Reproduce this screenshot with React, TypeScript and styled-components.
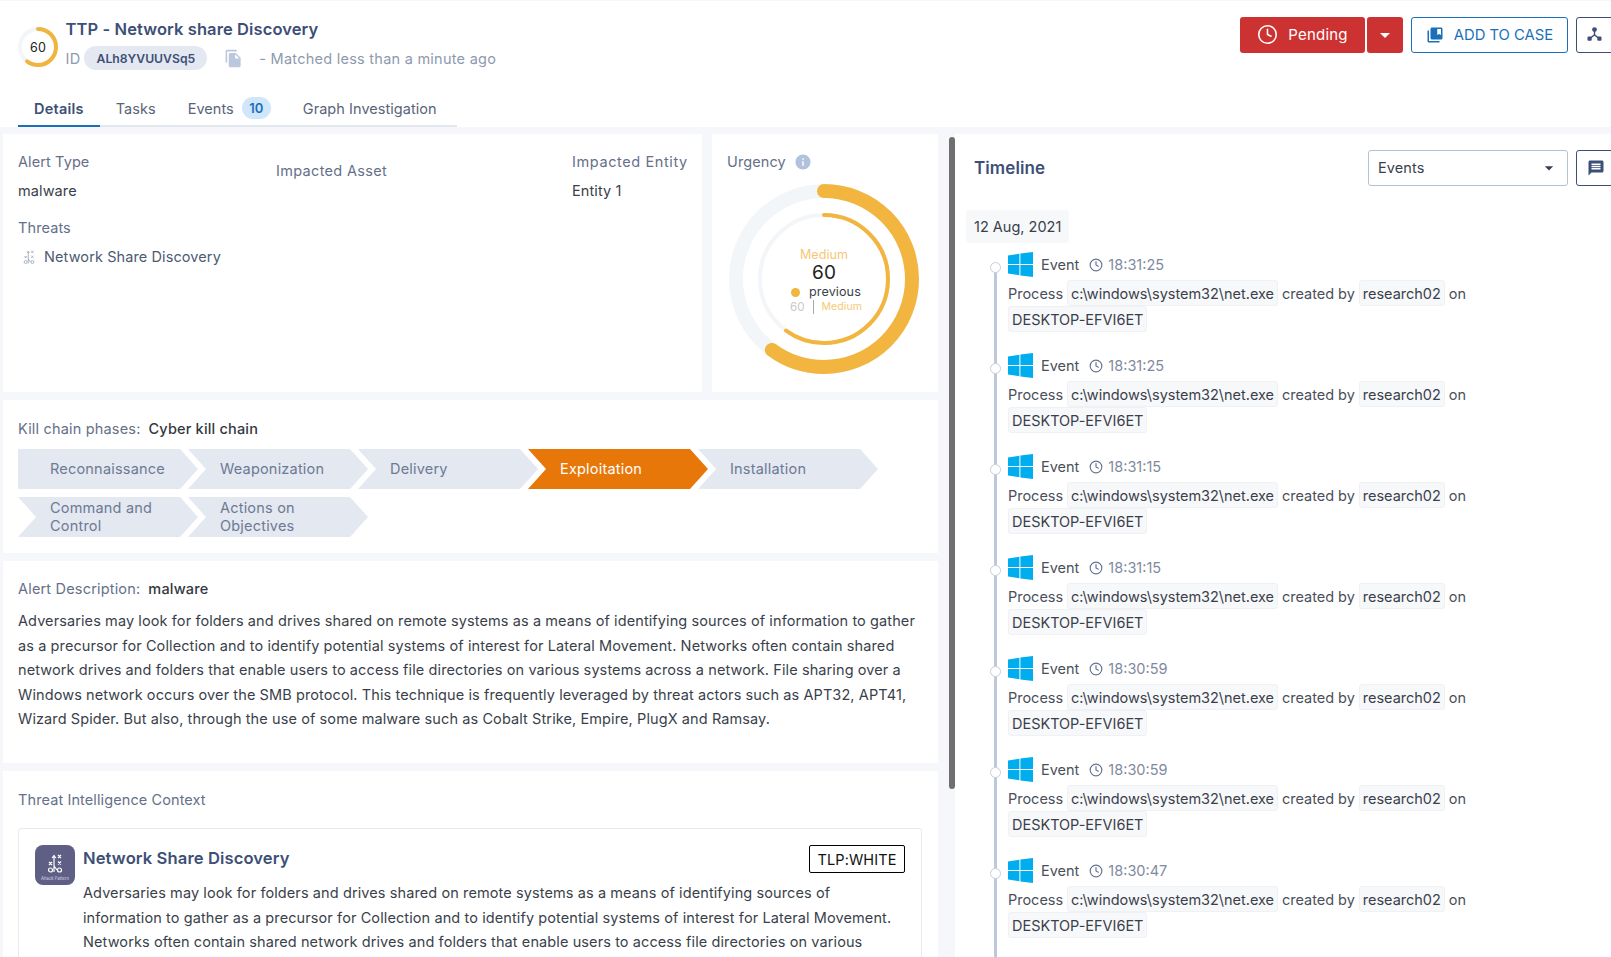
import styled, { createGlobalStyle } from "styled-components";
import { Clock } from "lucide-react";
import { MdArrowDropDown, MdCollectionsBookmark, MdFileCopy, MdInfo, MdMessage } from "react-icons/md";

const GlobalStyle = createGlobalStyle`
  html, body { margin: 0; height: 100%; overflow: hidden; }
  body {
    background: #f5f7fa;
    font-family: Inter, "Open Sans", sans-serif;
    font-size: 14.5px;
    letter-spacing: 0.1px;
    color: #3a3f4b;
  }
  * { box-sizing: border-box; }
`;

const Page = styled.div`
  width: 1611px;
  height: 957px;
  padding-top: 1px;
  overflow: hidden;
`;

// Header
const Header = styled.header`
  background: #fff;
  height: 126px;
  display: flex;
  flex-direction: column;
  justify-content: space-between;
`;

const TopRow = styled.div`
  display: flex;
  justify-content: space-between;
  padding: 16px 0 0 18px;
`;

const TitleGroup = styled.div`
  display: flex;
  gap: 7.5px;
`;

const ScoreRing = styled.div`
  position: relative;
  width: 40px;
  height: 40px;
  margin-top: 10px;
  display: flex;
  align-items: center;
  justify-content: center;
  font-size: 12.5px;
  color: #222;
  svg { position: absolute; inset: 0; }
`;

const Title = styled.div`
  font-size: 16.5px;
  font-weight: 600;
  line-height: 24px;
  color: #3d4f76;
`;

const IdRow = styled.div`
  display: flex;
  align-items: center;
  height: 24px;
  margin-top: 5px;
  color: #8e99ae;
  letter-spacing: 0.25px;
`;

const IdChip = styled.span`
  display: flex;
  align-items: center;
  justify-content: center;
  width: 123px;
  height: 24px;
  margin-left: 4px;
  border-radius: 12px;
  background: #e3e8f1;
  color: #3d4f76;
  font-size: 12.2px;
  font-weight: 600;
  letter-spacing: 0;
`;

const CopyIcon = styled(MdFileCopy)`
  margin: 0 16px 0 17px;
  color: #bcc7dc;
  font-size: 19px;
`;

const Actions = styled.div`
  display: flex;
  flex-shrink: 0;
  gap: 8px;
  margin-right: -14px;
`;

const StatusGroup = styled.div`
  display: flex;
  gap: 2px;
`;

const StatusButton = styled.button`
  display: flex;
  align-items: center;
  justify-content: center;
  gap: 10px;
  height: 36px;
  width: ${(p: { $wide?: boolean }) => (p.$wide ? "125px" : "36px")};
  padding: 0 0 1px;
  border: 0;
  border-radius: 3px;
  background: #cd3232;
  color: #fff;
  font: inherit;
  font-size: 15px;
  letter-spacing: 0.2px;
`;

const OutlineButton = styled.button<{ $accent?: boolean; $width: number }>`
  display: flex;
  align-items: center;
  justify-content: center;
  gap: 10px;
  flex-shrink: 0;
  height: 36px;
  width: ${(p) => p.$width}px;
  padding: 0 0 1px;
  border: 1px solid ${(p) => (p.$accent ? "#1a70b8" : "#3d4f76")};
  border-radius: 3px;
  background: #fff;
  color: ${(p) => (p.$accent ? "#1a70b8" : "#3d4f76")};
  font: inherit;
  font-size: 14.8px;
  svg { flex-shrink: 0; }
`;

const IconSlot = styled.span`
  display: flex;
  width: 36px;
  justify-content: center;
  margin-right: 12px;
`;

const Tabs = styled.nav`
  display: flex;
  align-items: stretch;
  width: 439px;
  height: 30px;
  margin-left: 18px;
  border-bottom: 2px solid #e3e7ee;
`;

const Tab = styled.div<{ $active?: boolean }>`
  display: flex;
  flex-shrink: 0;
  align-items: center;
  gap: 8px;
  padding: 0 16px 6px;
  margin-bottom: -2px;
  border-bottom: 2px solid ${(p) => (p.$active ? "#1a70b8" : "transparent")};
  color: ${(p) => (p.$active ? "#3d4f76" : "#5a6478")};
  font-weight: ${(p) => (p.$active ? 600 : 400)};
  letter-spacing: ${(p) => (p.$active ? "0.22px" : "0.05px")};
  white-space: nowrap;
`;

const TabBadge = styled.span`
  display: flex;
  align-items: center;
  justify-content: center;
  width: 29px;
  height: 22px;
  border-radius: 11px;
  background: #cfe6fb;
  color: #1a70b8;
  font-size: 13px;
  font-weight: 600;
`;

// Body
const Body = styled.main`
  display: flex;
  height: 830px;
  margin-top: 7px;
  padding-left: 3px;
`;

const LeftColumn = styled.div`
  flex: 0 0 935px;
  display: flex;
  flex-direction: column;
  gap: 8px;
`;

const TopPanels = styled.div`
  display: flex;
  gap: 10px;
  height: 258px;
`;

const Panel = styled.section`
  background: #fff;
  padding: 18px 16px 16px 15px;
`;

const AlertPanel = styled(Panel)`
  flex: 0 0 699px;
  min-width: 0;
  display: grid;
  grid-template-columns: 258px 296px minmax(0, 1fr);
  align-content: start;
`;

const UrgencyPanel = styled(Panel)`
  flex: 1;
  min-width: 0;
`;

const Field = styled.div<{ $offset?: number }>`
  padding-top: ${(p) => p.$offset ?? 0}px;
`;

const Label = styled.div<{ $spread?: number; $gap?: number }>`
  margin-top: ${(p) => p.$gap ?? 0}px;
  line-height: 20px;
  letter-spacing: ${(p) => p.$spread ?? 0.1}px;
  color: #657089;
  white-space: nowrap;
`;

const Value = styled.div`
  margin-top: 9px;
  line-height: 20px;
  color: #3a3f4b;
`;

const ThreatRow = styled.div`
  display: flex;
  align-items: center;
  gap: 9px;
  margin-top: 9px;
  padding-left: 5px;
  line-height: 20px;
  color: #4d5a72;
`;

const UrgencyLabel = styled(Label)`
  display: flex;
  align-items: center;
  gap: 8px;
  svg { color: #b3c2dc; font-size: 18px; }
`;

const Donut = styled.div`
  position: relative;
  width: 190px;
  height: 190px;
  margin: 12px 0 0 2px;
`;

const DonutCenter = styled.div`
  position: absolute;
  top: 63px;
  left: 50px;
  width: 90px;
  text-align: center;
`;

const DonutLevel = styled.div`
  font-size: 12.5px;
  line-height: 15px;
  color: #f5c876;
`;

const DonutScore = styled.div`
  font-size: 19px;
  line-height: 22px;
  color: #222;
`;

const PreviousRow = styled.div`
  display: flex;
  align-items: center;
  justify-content: flex-start;
  gap: 9px;
  margin-left: 12px;
  font-size: 12.6px;
  line-height: 16px;
  color: #3a3f4b;
`;

const PreviousDot = styled.span`
  width: 9px;
  height: 9px;
  border-radius: 50%;
  background: #f2b53f;
`;

const PreviousValues = styled.div`
  display: flex;
  align-items: center;
  justify-content: center;
  gap: 8px;
  margin: 0 0 0 4px;
  font-size: 10.5px;
  line-height: 14px;
  color: #f5c876;
`;

const PreviousScore = styled.span`
  padding-right: 8px;
  border-right: 1px solid #a9a9a9;
  color: #c9c9c9;
  font-size: 11.5px;
`;

const KillPanel = styled(Panel)`
  height: 153px;
  padding-top: 19px;
`;

const InlineLabel = styled.div`
  display: flex;
  gap: 8px;
  line-height: 20px;
  letter-spacing: 0.18px;
  color: #657089;
  b { font-weight: 500; color: #33383f; }
`;

const Chain = styled.div`
  display: flex;
  flex-wrap: wrap;
  row-gap: 8px;
  width: 880px;
  margin-top: 10px;
`;

const Phase = styled.div<{ $active?: boolean; $first?: boolean }>`
  display: flex;
  align-items: center;
  width: 180px;
  height: 40px;
  margin-right: -10px;
  padding: 0 30px 0 32px;
  background: ${(p) => (p.$active ? "#e8770a" : "#e3e8f1")};
  color: ${(p) => (p.$active ? "#fff" : "#6d7a93")};
  line-height: 18px;
  letter-spacing: 0.2px;
  clip-path: ${(p) =>
    p.$first
      ? "polygon(0 0, 162px 0, 100% 50%, 162px 100%, 0 100%)"
      : "polygon(0 0, 162px 0, 100% 50%, 162px 100%, 0 100%, 18px 50%)"};
`;

const DescriptionPanel = styled(Panel)`
  height: 202px;
`;

const Paragraph = styled.p`
  margin: 10px 0 0;
  line-height: 24.5px;
  color: #3a3f4b;
`;

const IntelPanel = styled(Panel)`
  flex: 1;
  overflow: hidden;
  padding-top: 19px;
`;

const IntelCard = styled.article`
  display: flex;
  gap: 8px;
  height: 220px;
  margin-top: 18px;
  padding: 16px;
  border: 1px solid #e6e9ee;
  border-radius: 3px;
`;

const IntelLogo = styled.div`
  flex: 0 0 40px;
  display: flex;
  flex-direction: column;
  align-items: center;
  justify-content: flex-end;
  gap: 2px;
  height: 40px;
  padding-bottom: 4px;
  border-radius: 8px;
  background: #5f5f85;
  color: #d8d8e6;
  font-size: 4.2px;
  letter-spacing: 0;
  white-space: nowrap;
`;

const IntelBody = styled.div`
  flex: 1;
  min-width: 0;
`;

const IntelHeading = styled.div`
  display: flex;
  align-items: center;
  justify-content: space-between;
  height: 28px;
`;

const IntelTitle = styled.h3`
  margin: 0 0 2px;
  font-size: 16.6px;
  font-weight: 600;
  color: #3d4f76;
`;

const TlpBadge = styled.span`
  display: flex;
  align-items: center;
  justify-content: center;
  width: 96px;
  height: 28px;
  border: 1px solid #000;
  border-radius: 2px;
  color: #111;
`;

const IntelText = styled(Paragraph)`
  margin-top: 8px;
`;

const ScrollThumb = styled.div`
  flex: 0 0 6px;
  height: 652px;
  margin: 3px 0 0 11px;
  border-radius: 3px;
  background: #6f6f6f;
`;

// Timeline
const TimelinePanel = styled.section`
  flex: 1;
  min-width: 0;
  background: #fff;
  overflow: hidden;
`;

const TimelineHead = styled.div`
  display: flex;
  align-items: center;
  height: 36px;
  margin-top: 16px;
  padding-left: 19px;
`;

const TimelineTitle = styled.h2`
  flex: 0 0 394px;
  margin: 0;
  font-size: 17px;
  font-weight: 600;
  color: #3d4f76;
`;

const EventSelect = styled.div`
  display: flex;
  align-items: center;
  justify-content: space-between;
  flex-shrink: 0;
  width: 200px;
  height: 36px;
  margin-right: 8px;
  padding: 0 8px 1px 9px;
  border: 1px solid #b5c2d0;
  border-radius: 3px;
  color: #3a3f4b;
  svg { font-size: 20px; }
`;

const DateChip = styled.div`
  display: inline-flex;
  align-items: center;
  height: 33px;
  margin: 24px 0 9px 11px;
  padding: 0 8px;
  border-radius: 3px;
  background: #f6f8fa;
  color: #3a3f4b;
  letter-spacing: 0;
`;

const EventList = styled.div`
  margin-left: 53px;
`;

const EventItem = styled.div`
  position: relative;
  height: 101px;
`;

const Dot = styled.span`
  position: absolute;
  z-index: 1;
  top: 10px;
  left: -18px;
  width: 11px;
  height: 11px;
  border: 1px solid #c5cfdf;
  border-radius: 50%;
  background: #fff;
`;

const Rail = styled.span`
  position: absolute;
  top: 15px;
  left: -14px;
  width: 2.5px;
  height: 101px;
  background: #bcc8db;
`;

const EventHead = styled.div`
  display: flex;
  align-items: center;
  height: 25px;
  letter-spacing: 0;
`;

const EventName = styled.span`
  margin: 0 10px 0 8px;
  color: #4a4f5a;
`;

const EventTime = styled.span`
  display: flex;
  align-items: center;
  gap: 5px;
  color: #7f8aa0;
  svg { color: #66748f; }
`;

const EventBody = styled.div`
  display: flex;
  flex-wrap: wrap;
  align-items: center;
  column-gap: 4px;
  width: 480px;
  margin-top: 3px;
  color: #4a4f5a;
  letter-spacing: -0.02px;
`;

const Code = styled.span`
  display: flex;
  align-items: center;
  height: 26px;
  padding: 0 3px;
  border: 1px solid #eff1f4;
  border-radius: 3px;
  background: #f7f8fa;
  color: #3a3f4b;
`;

const WindowsLogo = () => (
  <svg width="25" height="25" viewBox="0 0 25 25" fill="#00adef">
    <path d="M0 3.4 11.4 1.7V12H0ZM12.4 1.6 25 0V12H12.4ZM0 13H11.4V23.3L0 21.6ZM12.4 13H25V25L12.4 23.4Z" />
  </svg>
);

const HubIcon = () => (
  <svg width="15" height="15" viewBox="0 0 15 15" fill="#3d4f76">
    <circle cx="7.5" cy="2.6" r="2.4" />
    <rect x="0.5" y="9.5" width="4.2" height="4.2" rx="1" />
    <rect x="10.3" y="9.5" width="4.2" height="4.2" rx="1" />
    <path d="M6.8 4h1.4v3.6l3.4 2.6-.9 1.1-3.2-2.5-3.2 2.5-.9-1.1 3.4-2.6Z" />
  </svg>
);

const PlayGlyph = ({ color, size }: { color: string; size: number }) => (
  <svg width={size} height={size * 1.25} viewBox="0 0 16 20" fill="none" stroke={color} strokeWidth="1.2">
    <path d="M7 18V2M5.2 4 7 1.5 8.8 4M11 1l3 3M14 1l-3 3M11 7.5l3 3M14 7.5l-3 3M2 8l3 3M5 8l-3 3M7 12l3 4" />
    <circle cx="3.5" cy="16" r="2" />
    <circle cx="12.5" cy="16" r="2" />
  </svg>
);

const Arc = ({ r, width, size, color, track }: { r: number; width: number; size: number; color: string; track: string }) => {
  const c = 2 * Math.PI * r;
  return (
    <g transform={`rotate(-90 ${size / 2} ${size / 2})`} fill="none" strokeWidth={width}>
      <circle cx={size / 2} cy={size / 2} r={r} stroke={track} />
      <circle
        cx={size / 2}
        cy={size / 2}
        r={r}
        stroke={color}
        strokeLinecap="round"
        strokeDasharray={`${c * 0.6} ${c}`}
      />
    </g>
  );
};

const description =
  "Adversaries may look for folders and drives shared on remote systems as a means of identifying sources of information to gather as a precursor for Collection and to identify potential systems of interest for Lateral Movement. Networks often contain shared network drives and folders that enable users to access file directories on various systems across a network. File sharing over a Windows network occurs over the SMB protocol. This technique is frequently leveraged by threat actors such as APT32, APT41, Wizard Spider. But also, through the use of some malware such as Cobalt Strike, Empire, PlugX and Ramsay.";

const intelExcerpt = description.slice(0, description.indexOf(" systems across a network"));

const phases = [
  "Reconnaissance",
  "Weaponization",
  "Delivery",
  "Exploitation",
  "Installation",
  "Command and Control",
  "Actions on Objectives",
];

const events = ["18:31:25", "18:31:25", "18:31:15", "18:31:15", "18:30:59", "18:30:59", "18:30:47"];

export default function App() {
  return (
    <Page>
      <GlobalStyle />
      <Header>
        <TopRow>
          <TitleGroup>
            <ScoreRing>
              <svg width="40" height="40" viewBox="0 0 40 40">
                <Arc r={18} width={4} size={40} color="#f0b53e" track="#f3f6f9" />
              </svg>
              60
            </ScoreRing>
            <div>
              <Title>TTP - Network share Discovery</Title>
              <IdRow>
                ID
                <IdChip>ALh8YVUUVSq5</IdChip>
                <CopyIcon />
                - Matched less than a minute ago
              </IdRow>
            </div>
          </TitleGroup>
          <Actions>
            <StatusGroup>
              <StatusButton $wide>
                <Clock size={21} strokeWidth={1.8} />
                Pending
              </StatusButton>
              <StatusButton>
                <MdArrowDropDown size={24} />
              </StatusButton>
            </StatusGroup>
            <OutlineButton $accent $width={157}>
              <MdCollectionsBookmark size={18} />
              ADD TO CASE
            </OutlineButton>
            <OutlineButton $width={49}>
              <IconSlot>
                <HubIcon />
              </IconSlot>
            </OutlineButton>
          </Actions>
        </TopRow>
        <Tabs>
          <Tab $active>Details</Tab>
          <Tab>Tasks</Tab>
          <Tab>
            Events <TabBadge>10</TabBadge>
          </Tab>
          <Tab>Graph Investigation</Tab>
        </Tabs>
      </Header>
      <Body>
        <LeftColumn>
          <TopPanels>
            <AlertPanel>
              <div>
                <Label>Alert Type</Label>
                <Value>malware</Value>
                <Label $gap={17}>Threats</Label>
                <ThreatRow>
                  <PlayGlyph color="#a3abb8" size={12} />
                  Network Share Discovery
                </ThreatRow>
              </div>
              <Field $offset={9}>
                <Label $spread={0.32}>Impacted Asset</Label>
              </Field>
              <Field>
                <Label $spread={0.6}>Impacted Entity</Label>
                <Value>Entity 1</Value>
              </Field>
            </AlertPanel>
            <UrgencyPanel>
              <UrgencyLabel>
                Urgency <MdInfo />
              </UrgencyLabel>
              <Donut>
                <svg width="190" height="190" viewBox="0 0 190 190">
                  <Arc r={88} width={14} size={190} color="#f2b53f" track="#f3f6f9" />
                  <Arc r={64} width={4} size={190} color="#f2b53f" track="#f3f6f9" />
                </svg>
                <DonutCenter>
                  <DonutLevel>Medium</DonutLevel>
                  <DonutScore>60</DonutScore>
                  <PreviousRow>
                    <PreviousDot />
                    previous
                  </PreviousRow>
                  <PreviousValues>
                    <PreviousScore>60</PreviousScore>
                    Medium
                  </PreviousValues>
                </DonutCenter>
              </Donut>
            </UrgencyPanel>
          </TopPanels>
          <KillPanel>
            <InlineLabel>
              Kill chain phases: <b>Cyber kill chain</b>
            </InlineLabel>
            <Chain>
              {phases.map((name, i) => (
                <Phase key={name} $first={i === 0} $active={name === "Exploitation"}>
                  {name}
                </Phase>
              ))}
            </Chain>
          </KillPanel>
          <DescriptionPanel>
            <InlineLabel>
              Alert Description: <b>malware</b>
            </InlineLabel>
            <Paragraph>{description}</Paragraph>
          </DescriptionPanel>
          <IntelPanel>
            <Label>Threat Intelligence Context</Label>
            <IntelCard>
              <IntelLogo>
                <PlayGlyph color="#fff" size={16} />
                Attack Pattern
              </IntelLogo>
              <IntelBody>
                <IntelHeading>
                  <IntelTitle>Network Share Discovery</IntelTitle>
                  <TlpBadge>TLP:WHITE</TlpBadge>
                </IntelHeading>
                <IntelText>{intelExcerpt}</IntelText>
              </IntelBody>
            </IntelCard>
          </IntelPanel>
        </LeftColumn>
        <ScrollThumb />
        <TimelinePanel>
          <TimelineHead>
            <TimelineTitle>Timeline</TimelineTitle>
            <EventSelect>
              Events
              <MdArrowDropDown />
            </EventSelect>
            <OutlineButton $width={40}>
              <MdMessage size={18} />
            </OutlineButton>
          </TimelineHead>
          <DateChip>12 Aug, 2021</DateChip>
          <EventList>
            {events.map((time, i) => (
              <EventItem key={i}>
                <Dot />
                <Rail />
                <EventHead>
                  <WindowsLogo />
                  <EventName>Event</EventName>
                  <EventTime>
                    <Clock size={14} />
                    {time}
                  </EventTime>
                </EventHead>
                <EventBody>
                  Process <Code>c:\windows\system32\net.exe</Code> created by <Code>research02</Code> on{" "}
                  <Code>DESKTOP-EFVI6ET</Code>
                </EventBody>
              </EventItem>
            ))}
          </EventList>
        </TimelinePanel>
      </Body>
    </Page>
  );
}
